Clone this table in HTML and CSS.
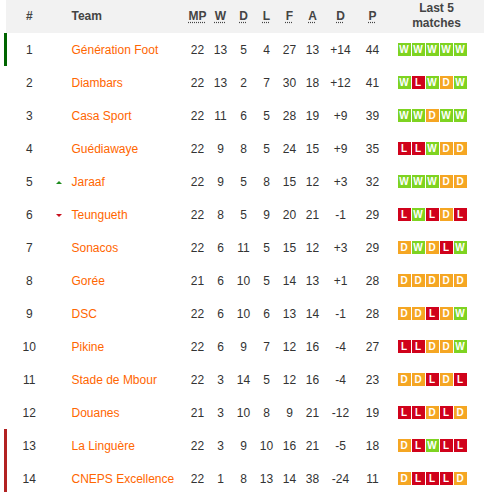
FILE: index.html
```html
<!DOCTYPE html>
<html>
<head>
<meta charset="utf-8">
<link rel="stylesheet" href="styles.css">
</head>
<body>
<table class="standings">
  <colgroup>
    <col class="w-rank"><col class="w-arrow"><col class="w-team">
    <col class="w-mp"><col class="w-w"><col class="w-d"><col class="w-l">
    <col class="w-f"><col class="w-a"><col class="w-gd"><col class="w-p"><col class="w-form">
  </colgroup>
  <thead>
    <tr>
      <th class="rank">#</th>
      <th></th>
      <th class="team">Team</th>
      <th><abbr>MP</abbr></th>
      <th><abbr>W</abbr></th>
      <th><abbr>D</abbr></th>
      <th><abbr>L</abbr></th>
      <th><abbr>F</abbr></th>
      <th><abbr>A</abbr></th>
      <th><abbr>D</abbr></th>
      <th><abbr>P</abbr></th>
      <th class="form-h">Last 5<br>matches</th>
    </tr>
  </thead>
  <tbody>
    <tr class="promo"><td class="rank">1</td><td></td><td class="team">Génération Foot</td><td>22</td><td>13</td><td>5</td><td>4</td><td>27</td><td>13</td><td>+14</td><td>44</td><td class="form"><span class="b w">W</span><span class="b w">W</span><span class="b w">W</span><span class="b w">W</span><span class="b w">W</span></td></tr>
    <tr><td class="rank">2</td><td></td><td class="team">Diambars</td><td>22</td><td>13</td><td>2</td><td>7</td><td>30</td><td>18</td><td>+12</td><td>41</td><td class="form"><span class="b w">W</span><span class="b l">L</span><span class="b w">W</span><span class="b d">D</span><span class="b w">W</span></td></tr>
    <tr><td class="rank">3</td><td></td><td class="team">Casa Sport</td><td>22</td><td>11</td><td>6</td><td>5</td><td>28</td><td>19</td><td>+9</td><td>39</td><td class="form"><span class="b w">W</span><span class="b w">W</span><span class="b d">D</span><span class="b w">W</span><span class="b w">W</span></td></tr>
    <tr><td class="rank">4</td><td></td><td class="team">Guédiawaye</td><td>22</td><td>9</td><td>8</td><td>5</td><td>24</td><td>15</td><td>+9</td><td>35</td><td class="form"><span class="b l">L</span><span class="b l">L</span><span class="b w">W</span><span class="b d">D</span><span class="b d">D</span></td></tr>
    <tr><td class="rank">5</td><td><span class="up"></span></td><td class="team">Jaraaf</td><td>22</td><td>9</td><td>5</td><td>8</td><td>15</td><td>12</td><td>+3</td><td>32</td><td class="form"><span class="b w">W</span><span class="b w">W</span><span class="b w">W</span><span class="b d">D</span><span class="b d">D</span></td></tr>
    <tr><td class="rank">6</td><td><span class="down"></span></td><td class="team">Teungueth</td><td>22</td><td>8</td><td>5</td><td>9</td><td>20</td><td>21</td><td>-1</td><td>29</td><td class="form"><span class="b l">L</span><span class="b w">W</span><span class="b l">L</span><span class="b d">D</span><span class="b l">L</span></td></tr>
    <tr><td class="rank">7</td><td></td><td class="team">Sonacos</td><td>22</td><td>6</td><td>11</td><td>5</td><td>15</td><td>12</td><td>+3</td><td>29</td><td class="form"><span class="b d">D</span><span class="b w">W</span><span class="b d">D</span><span class="b l">L</span><span class="b w">W</span></td></tr>
    <tr><td class="rank">8</td><td></td><td class="team">Gorée</td><td>21</td><td>6</td><td>10</td><td>5</td><td>14</td><td>13</td><td>+1</td><td>28</td><td class="form"><span class="b d">D</span><span class="b d">D</span><span class="b d">D</span><span class="b d">D</span><span class="b d">D</span></td></tr>
    <tr><td class="rank">9</td><td></td><td class="team">DSC</td><td>22</td><td>6</td><td>10</td><td>6</td><td>13</td><td>14</td><td>-1</td><td>28</td><td class="form"><span class="b d">D</span><span class="b d">D</span><span class="b l">L</span><span class="b d">D</span><span class="b w">W</span></td></tr>
    <tr><td class="rank">10</td><td></td><td class="team">Pikine</td><td>22</td><td>6</td><td>9</td><td>7</td><td>12</td><td>16</td><td>-4</td><td>27</td><td class="form"><span class="b l">L</span><span class="b l">L</span><span class="b d">D</span><span class="b d">D</span><span class="b w">W</span></td></tr>
    <tr><td class="rank">11</td><td></td><td class="team">Stade de Mbour</td><td>22</td><td>3</td><td>14</td><td>5</td><td>12</td><td>16</td><td>-4</td><td>23</td><td class="form"><span class="b d">D</span><span class="b d">D</span><span class="b l">L</span><span class="b d">D</span><span class="b l">L</span></td></tr>
    <tr><td class="rank">12</td><td></td><td class="team">Douanes</td><td>21</td><td>3</td><td>10</td><td>8</td><td>9</td><td>21</td><td>-12</td><td>19</td><td class="form"><span class="b l">L</span><span class="b l">L</span><span class="b d">D</span><span class="b l">L</span><span class="b d">D</span></td></tr>
    <tr class="releg"><td class="rank">13</td><td></td><td class="team">La Linguère</td><td>22</td><td>3</td><td>9</td><td>10</td><td>16</td><td>21</td><td>-5</td><td>18</td><td class="form"><span class="b d">D</span><span class="b l">L</span><span class="b w">W</span><span class="b l">L</span><span class="b l">L</span></td></tr>
    <tr class="releg"><td class="rank">14</td><td></td><td class="team">CNEPS Excellence</td><td>22</td><td>1</td><td>8</td><td>13</td><td>14</td><td>38</td><td>-24</td><td>11</td><td class="form"><span class="b d">D</span><span class="b l">L</span><span class="b l">L</span><span class="b l">L</span><span class="b d">D</span></td></tr>
  </tbody>
</table>
</body>
</html>
```
FILE: styles.css
```css
html, body {
  margin: 0;
  padding: 0;
  background: #fff;
}
body {
  font-family: "Liberation Sans", Arial, sans-serif;
  font-size: 12px;
  color: #333;
}
.standings {
  margin-left: 4px;
  width: 480px;
  table-layout: fixed;
  border-collapse: collapse;
  border-spacing: 0;
}
.w-rank { width: 46px; }
.w-arrow { width: 16px; }
.w-team { width: 118px; }
.w-mp { width: 24px; }
.w-w { width: 22px; }
.w-d { width: 24px; }
.w-l { width: 22px; }
.w-f { width: 24px; }
.w-a { width: 22px; }
.w-gd { width: 34px; }
.w-p { width: 30px; }
.w-form { width: 98px; }

thead tr {
  background: #f2f2f2;
  height: 33px;
}
th {
  font-weight: bold;
  color: #444;
  text-align: center;
  padding: 0;
  vertical-align: middle;
  line-height: 15px;
}
th.team { text-align: left; padding-left: 4px; }
th abbr {
  text-decoration: underline dotted;
  text-underline-offset: 2px;
}
th.form-h { line-height: 15px; padding-bottom: 1px; }

tbody tr { height: 33px; }
td {
  padding: 0;
  text-align: center;
  vertical-align: middle;
  white-space: nowrap;
}
td.rank, th.rank {
  border-left: 3px solid transparent;
}
tr.promo td.rank { border-left-color: #006400; }
tr.releg td.rank { border-left-color: #b22222; }
td.team {
  text-align: left;
  padding-left: 4px;
  color: #f60;
}
td.form {
  text-align: left;
  padding-left: 10px;
  font-size: 0;
}
.b {
  display: inline-block;
  width: 13px;
  height: 13px;
  margin-right: 1px;
  color: #fff;
  font-size: 10px;
  font-weight: bold;
  line-height: 13px;
  text-align: center;
  vertical-align: middle;
}
.b.w { background: #7ed321; }
.b.l { background: #d0021b; }
.b.d { background: #f5a623; }

.up, .down {
  display: inline-block;
  width: 0;
  height: 0;
  border-left: 3px solid transparent;
  border-right: 3px solid transparent;
  vertical-align: middle;
}
.up { border-bottom: 3px solid #1e8c1e; }
.down { border-top: 3px solid #c8101e; }
```
